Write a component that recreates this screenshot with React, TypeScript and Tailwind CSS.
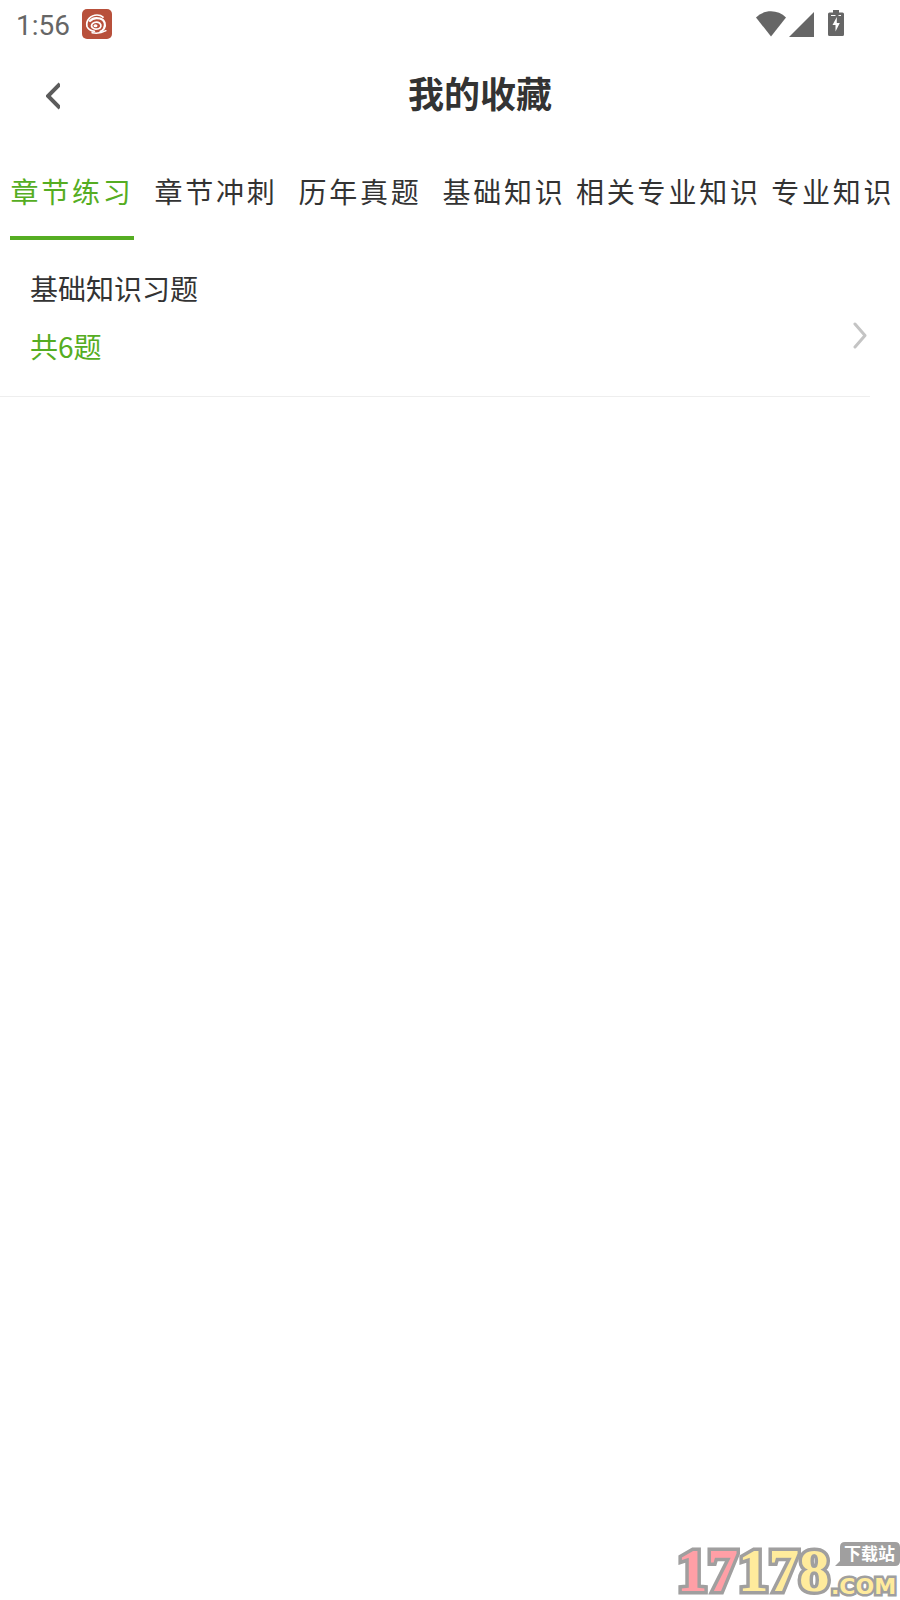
import React, { useState } from 'react';

type Tab = {
  id: string;
  label: string;
};

type Chapter = {
  id: number;
  title: string;
  count: number;
};

const TABS: Tab[] = [
  { id: 'chapter', label: '章节练习' },
  { id: 'sprint', label: '章节冲刺' },
  { id: 'past', label: '历年真题' },
  { id: 'basic', label: '基础知识' },
  { id: 'related', label: '相关专业知识' },
  { id: 'major', label: '专业知识' },
];

const CHAPTERS: Record<string, Chapter[]> = {
  chapter: [{ id: 1, title: '基础知识习题', count: 6 }],
};

function StatusBar() {
  return (
    <div className="flex h-12 items-center justify-between pl-4 pr-14 text-[#666666]">
      <div className="flex items-center gap-3">
        <span className="pt-1 font-[Roboto,sans-serif] text-[28px] leading-8">1:56</span>
        <svg viewBox="0 0 30 30" className="h-[30px] w-[30px]" aria-hidden="true">
          <rect width="30" height="30" rx="5" fill="#b8503b" />
          <g fill="none" stroke="#fff" strokeLinecap="round">
            <path d="M5 17.500C3.500 11 9 6 15 6c2.500 0 4.500.7 6 2.200" strokeWidth="1.700" />
            <path d="M8 12c2-2.500 6-3.500 10-2.500 5 1.500 6 6.500 4 10-1 1.500-2 2.500-3.500 3" strokeWidth="2.200" />
            <path d="M9.500 17c0-3.500 5-5 8-3 2.500 2 1.500 5-1 5.700-3 .8-6.500.3-7-2.700" strokeWidth="1.700" />
            <path d="M5.500 18.500c1.500 2.500 4 3.500 7 3.800" strokeWidth="1.500" />
            <path d="M10 23.700c4.500 1 9.500.3 14-2" strokeWidth="1.400" />
          </g>
          <ellipse cx="13.500" cy="16.700" rx="2" ry="1.500" fill="#fff" />
        </svg>
      </div>
      <div className="flex items-center">
        <svg viewBox="0 0 30 26" className="h-[26px] w-[30px]" fill="currentColor" aria-hidden="true">
          <path d="M0 6.500C8-1.800 22-1.800 30 6.500L15 25.500z" />
        </svg>
        <svg viewBox="0 0 26 26" className="ml-0.5 h-[26px] w-[26px]" fill="currentColor" aria-hidden="true">
          <path d="M26 1v25H1z" />
        </svg>
        <svg viewBox="0 0 16 26" className="mb-0.5 ml-3.5 h-[26px] w-4" aria-hidden="true">
          <path
            d="M5 0h6v2.500h3.500A1.500 1.500 0 0 1 16 4v20.500a1.500 1.500 0 0 1-1.500 1.500h-13A1.500 1.500 0 0 1 0 24.500V4a1.500 1.500 0 0 1 1.500-1.500H5z"
            fill="currentColor"
          />
          <path d="M3 5.500h4.500M10.500 5.500H13" stroke="#fff" strokeWidth="1" />
          <path d="M8.800 7L4.500 15h3v6.500L11.800 13H8.800z" fill="#fff" />
        </svg>
      </div>
    </div>
  );
}

function Watermark() {
  return (
    <svg
      viewBox="0 0 223 60"
      className="mt-auto h-[60px] w-[223px] self-end overflow-visible"
      role="img"
      aria-label="17178.com 下载站"
    >
      <text
        x="0"
        y="51"
        fontFamily="'Liberation Serif', serif"
        fontWeight="700"
        fontSize="61"
        stroke="#a09f9f"
        strokeWidth="7"
        paintOrder="stroke"
      >
        <tspan fill="#ff9fa6">17</tspan>
        <tspan fill="#ffeb9c">178</tspan>
      </text>
      <path d="M168 2h50q5 0 5 5v14q0 5-5 5h-60l5-5V7q0-5 5-5z" fill="#a09f9f" />
      <text
        x="167"
        y="20"
        fontFamily="'Noto Sans CJK SC', sans-serif"
        fontWeight="700"
        fontSize="17"
        fill="#fff"
      >
        下载站
      </text>
      <text
        x="154"
        y="54"
        fontFamily="'DejaVu Sans', sans-serif"
        fontWeight="700"
        fontSize="22"
        fill="#ffeb9c"
        stroke="#a09f9f"
        strokeWidth="5"
        paintOrder="stroke"
      >
        .COM
      </text>
    </svg>
  );
}

export default function App() {
  const [active, setActive] = useState('chapter');
  const chapters = CHAPTERS[active] ?? [];

  return (
    <div className="flex min-h-screen flex-col overflow-hidden bg-white font-['Noto_Sans_CJK_SC',sans-serif] text-[#333333]">
      <StatusBar />

      <header className="flex h-24 items-center">
        <button type="button" aria-label="返回" className="flex h-full w-15 items-center justify-end">
          <svg viewBox="0 0 14 28" className="h-7 w-3.5" fill="none" stroke="#5c5c5c" strokeWidth="4" aria-hidden="true">
            <path d="M14 2L2 14l12 12" />
          </svg>
        </button>
        <h1 className="flex-1 pb-2 text-center text-4xl font-bold">我的收藏</h1>
      </header>

      <nav className="flex h-24 overflow-x-auto [scrollbar-width:none]" role="tablist">
        {TABS.map((tab) => (
          <button
            key={tab.id}
            type="button"
            role="tab"
            aria-selected={active === tab.id}
            onClick={() => setActive(tab.id)}
            className="flex min-w-36 shrink-0 justify-center whitespace-nowrap text-[28px] tracking-widest"
          >
            <span
              className={
                active === tab.id
                  ? 'flex h-full items-center border-b-4 border-[#55ad22] pt-0.5 text-[#55ad22]'
                  : 'flex h-full items-center border-b-4 border-transparent pt-0.5'
              }
            >
              {tab.label}
            </span>
          </button>
        ))}
      </nav>

      <ul className="mr-[30px]">
        {chapters.map((item) => (
          <li key={item.id} className="border-b border-[#eeeeee]">
            <a href="#" className="flex items-center justify-between pb-[30px] pl-[30px] pr-[3px] pt-7">
              <div className="flex flex-col gap-[18px] text-[28px] leading-10">
                <span>{item.title}</span>
                <span className="text-[#55ad22]">共{item.count}题</span>
              </div>
              <div className="pt-9">
                <svg
                  viewBox="0 0 14 28"
                  className="h-7 w-3.5"
                  fill="none"
                  stroke="#c4c4c4"
                  strokeWidth="3"
                  strokeLinecap="round"
                  strokeLinejoin="round"
                  aria-hidden="true"
                >
                  <path d="M2 3l10 11.500L2 26" />
                </svg>
              </div>
            </a>
          </li>
        ))}
      </ul>

      <Watermark />
    </div>
  );
}
